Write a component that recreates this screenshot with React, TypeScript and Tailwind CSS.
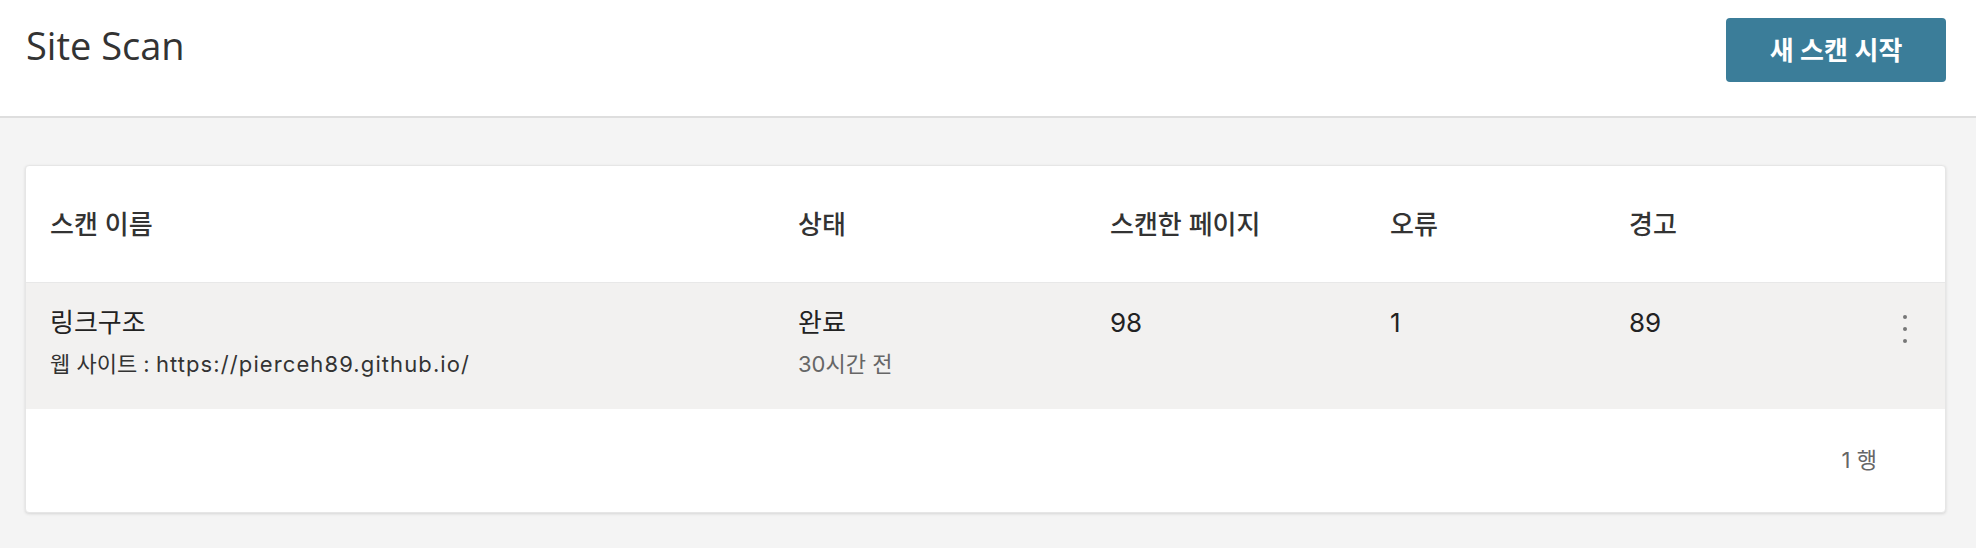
import React from 'react'

const font = {
    fontFamily: 'Inter, "Noto Sans CJK KR", sans-serif',
}

const columns = ['스캔 이름', '상태', '스캔한 페이지', '오류', '경고']

function MoreButton(): JSX.Element {
    return (
        <button className="flex flex-col items-center gap-[8px] px-2 py-1">
            <span className="block h-[4px] w-[4px] rounded-full bg-[#777]" />
            <span className="block h-[4px] w-[4px] rounded-full bg-[#777]" />
            <span className="block h-[4px] w-[4px] rounded-full bg-[#777]" />
        </button>
    )
}

function App(): JSX.Element {
    return (
        <div className="flex min-h-[548px] flex-col bg-[#f4f4f4] text-[#333]" style={font}>
            <header className="flex h-[118px] items-start justify-between border-b-2 border-[#dedede] bg-white pl-[26px] pr-[30px] pt-[18px]">
                <h1 className="pt-[8px] font-['Open_Sans',sans-serif] text-[38px] font-normal leading-none text-[#333]">
                    Site Scan
                </h1>
                <button className="h-[64px] w-[220px] rounded-[4px] bg-[#3b7d99] text-[26px] font-semibold text-white">
                    새 스캔 시작
                </button>
            </header>

            <main className="pl-[25px] pr-[30px] pt-[47px]">
                <div className="overflow-hidden rounded-[4px] border border-[#e6e6e6] bg-white shadow-[0_1px_3px_rgba(0,0,0,0.12)]">
                    <div className="grid h-[116px] grid-cols-[748px_312px_280px_239px_1fr] items-center pl-[24px] text-[26px] font-medium">
                        {columns.map((c) => (
                            <div key={c}>{c}</div>
                        ))}
                    </div>

                    <div className="grid h-[127px] grid-cols-[748px_312px_280px_239px_1fr_auto] border-t border-[#e8e8e8] bg-[#f2f1f0] pl-[24px] pr-[30px] pt-[22px]">
                        <div className="flex flex-col gap-[8px]">
                            <span className="text-[26px] leading-[36px] text-[#222]">링크구조</span>
                            <span className="text-[22px] leading-[30px] text-[#333]">
                                웹 사이트 :{' '}
                                <span className="tracking-[1.1px]">https://pierceh89.github.io/</span>
                            </span>
                        </div>
                        <div className="flex flex-col gap-[8px]">
                            <span className="text-[26px] leading-[36px] text-[#222]">완료</span>
                            <span className="text-[22px] leading-[30px] text-[#666]">30시간 전</span>
                        </div>
                        <div className="text-[26px] leading-[36px] text-[#222]">98</div>
                        <div className="text-[26px] leading-[36px] text-[#222]">1</div>
                        <div className="text-[26px] leading-[36px] text-[#222]">89</div>
                        <div className="pt-[6px]">
                            <MoreButton />
                        </div>
                    </div>

                    <div className="flex h-[103px] items-center justify-end pr-[68px] text-[22px] text-[#666]">
                        1 행
                    </div>
                </div>
            </main>
        </div>
    )
}

export default App
